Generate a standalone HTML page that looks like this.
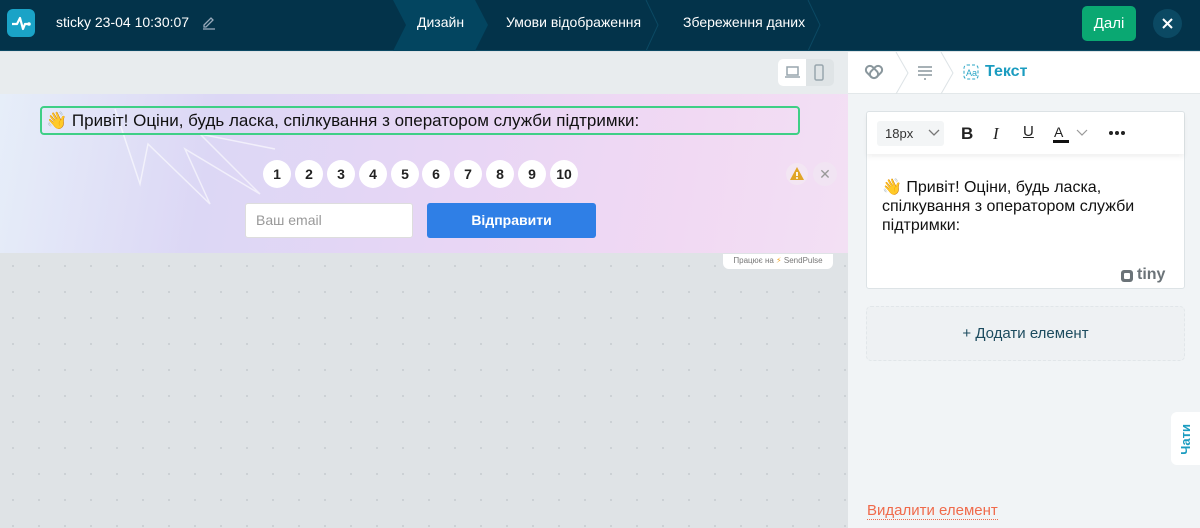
<!DOCTYPE html>
<html><head><meta charset="utf-8"><style>
*{box-sizing:border-box;margin:0;padding:0}
body{width:1200px;height:528px;overflow:hidden;font-family:"Liberation Sans","DejaVu Sans",sans-serif;position:relative;background:#dfe3e6}
.abs{position:absolute}
.hdr{left:0;top:0;width:1200px;height:51px;background:#03334a;border-bottom:1px solid #0b4963}
.tab{color:#fff;font-size:14px;top:0;height:51px;line-height:45px}
.num{width:28px;height:28px;border-radius:50%;background:#fff;top:160px;text-align:center;line-height:28px;font-weight:bold;font-size:14px;color:#222}
</style></head><body>
<div class="abs hdr"></div>
<div class="abs" style="left:7px;top:9px;width:28px;height:28px;border-radius:6px;background:#1aa3c7"></div>
<svg class="abs" style="left:7px;top:9px" width="28" height="28"><path d="M5 15h5l3-6 3 11 2-5h4" stroke="#fff" stroke-width="2.2" fill="none" stroke-linejoin="round"/><circle cx="22" cy="15" r="1.8" fill="#fff"/></svg>
<div class="abs" style="left:56px;top:14px;color:#fff;font-size:14px">sticky 23-04 10:30:07</div>
<svg class="abs" style="left:201px;top:14px" width="16" height="16"><path d="M3 11l7-7 2 2-7 7H3z" stroke="#9ab" fill="none" stroke-width="1.3"/><path d="M2 15h12" stroke="#9ab" stroke-width="1.3"/></svg>
<svg class="abs" style="left:390px;top:0" width="440" height="51"><polygon points="3,0 85,0 98,25 85,51 3,51 16,25" fill="#034560"/><path d="M256,0 L268,25 256,51 M418,0 L430,25 418,51" stroke="#0b4963" fill="none"/></svg>
<div class="abs tab" style="left:417px">Дизайн</div>
<div class="abs tab" style="left:506px">Умови відображення</div>
<div class="abs tab" style="left:683px">Збереження даних</div>
<div class="abs" style="left:1082px;top:6px;width:54px;height:35px;border-radius:5px;background:#0aa872;color:#fff;font-size:15px;text-align:center;line-height:35px">Далі</div>
<div class="abs" style="left:1153px;top:9px;width:29px;height:29px;border-radius:50%;background:#0b4963"></div>
<svg class="abs" style="left:1153px;top:9px" width="29" height="29"><path d="M10 10l9 9M19 10l-9 9" stroke="#fff" stroke-width="2"/></svg>

<div class="abs" style="left:0;top:52px;width:848px;height:42px;background:#e8ecee"></div>
<div class="abs" style="left:778px;top:59px;width:56px;height:27px;border-radius:5px;background:#dfe4e6"></div>
<div class="abs" style="left:778px;top:59px;width:28px;height:27px;border-radius:5px 0 0 5px;background:#fff"></div>
<svg class="abs" style="left:784px;top:64px" width="44" height="18"><rect x="3" y="3" width="11" height="8" fill="none" stroke="#98a6ad" stroke-width="1.5"/><path d="M1 13h15" stroke="#98a6ad" stroke-width="1.5"/><rect x="31" y="1" width="8" height="15" rx="1.5" fill="none" stroke="#98a6ad" stroke-width="1.5"/></svg>

<div class="abs" style="left:0;top:253px;width:848px;height:275px;background-color:#dfe3e6;background-image:radial-gradient(#c5cbcf 0.8px,transparent 1px);background-size:26px 26px"></div>
<div class="abs" style="left:0;top:94px;width:848px;height:159px;background:linear-gradient(100deg,#e6eef9 0%,#dcd7f5 25%,#e8d6f5 55%,#f1d9f3 80%,#f3e0f4 100%)"></div>
<svg class="abs" style="left:0;top:94px" width="300" height="159"><path d="M115 15 L140 90 L148 50 L210 110 L185 55 L260 100 L200 40 L275 55" stroke="#fff" stroke-opacity=".6" fill="none" stroke-width="1.5"/></svg>
<div class="abs" style="left:40px;top:106px;width:760px;height:29px;border:2px solid #3fcf86;border-radius:4px;font-size:17px;line-height:25px;padding-left:4px;color:#111">👋 Привіт! Оціни, будь ласка, спілкування з оператором служби підтримки:</div>
<div class="num abs" style="left:263px">1</div><div class="num abs" style="left:295px">2</div><div class="num abs" style="left:327px">3</div><div class="num abs" style="left:359px">4</div><div class="num abs" style="left:391px">5</div><div class="num abs" style="left:422px">6</div><div class="num abs" style="left:454px">7</div><div class="num abs" style="left:486px">8</div><div class="num abs" style="left:518px">9</div><div class="num abs" style="left:550px">10</div>
<div class="abs" style="left:786px;top:163px;width:22px;height:22px;border-radius:50%;background:#f3e6f3"></div>
<svg class="abs" style="left:788px;top:165px" width="18" height="18"><path d="M9 2 L16 15 H2Z" fill="#e0a526"/><path d="M9 7v4" stroke="#fff" stroke-width="1.8"/><circle cx="9" cy="13" r="1" fill="#fff"/></svg>
<div class="abs" style="left:813px;top:162px;width:24px;height:24px;border-radius:50%;background:#f1e4f3;color:#999;text-align:center;line-height:24px;font-size:14px">✕</div>
<div class="abs" style="left:245px;top:203px;width:168px;height:35px;background:#fff;border-radius:3px;border:1px solid #ddd;color:#999;font-size:14px;line-height:33px;padding-left:10px">Ваш email</div>
<div class="abs" style="left:427px;top:203px;width:169px;height:35px;background:#2f7fe6;border-radius:3px;color:#fff;font-size:14px;font-weight:bold;text-align:center;line-height:35px">Відправити</div>
<div class="abs" style="left:723px;top:254px;width:110px;height:15px;background:#fff;border-radius:0 0 6px 6px;font-size:8px;color:#777;text-align:center;line-height:14px">Працює на <span style="color:#f5a623">⚡</span> SendPulse</div>

<div class="abs" style="left:848px;top:52px;width:352px;height:476px;background:#f1f4f6"></div>
<div class="abs" style="left:848px;top:52px;width:352px;height:42px;background:#fff;border-bottom:1px solid #e3e8ea"></div>
<svg class="abs" style="left:848px;top:52px" width="200" height="42"><path d="M48 0 L60 21 48 42 M93 0 L105 21 93 42" stroke="#dde3e6" fill="none"/><rect x="20" y="13" width="8" height="14" rx="4" transform="rotate(-45 24 20)" fill="none" stroke="#8a979d" stroke-width="2"/><rect x="24" y="13" width="8" height="14" rx="4" transform="rotate(45 28 20)" fill="none" stroke="#8a979d" stroke-width="2"/><path d="M70 15h14 M70 19h14 M70 23h14 M76 27h2" stroke="#8a979d" stroke-width="1.5"/><rect x="116" y="13" width="14" height="14" rx="3" fill="none" stroke="#2aa6c6" stroke-dasharray="3 2"/><text x="118" y="24" font-size="9" fill="#2aa6c6" font-family="Liberation Sans">Aa</text></svg>
<div class="abs" style="left:985px;top:63px;color:#1b9cc0;font-size:16px;font-weight:bold">Текст</div>

<div class="abs" style="left:866px;top:111px;width:319px;height:178px;background:#fff;border:1px solid #dde3e6;border-radius:3px"></div>
<div class="abs" style="left:867px;top:112px;width:317px;height:42px;box-shadow:0 3px 5px rgba(0,0,0,.06)"></div>
<div class="abs" style="left:877px;top:121px;width:67px;height:25px;background:#f3f5f6;border-radius:3px;font-size:13px;line-height:25px;padding-left:8px;color:#333">18px</div>
<svg class="abs" style="left:928px;top:128px" width="12" height="10"><path d="M1 2l5 5 5-5" stroke="#777" fill="none" stroke-width="1.3"/></svg>
<div class="abs" style="left:961px;top:124px;font-size:17px;font-weight:bold;color:#222">B</div>
<div class="abs" style="left:993px;top:124px;font-size:17px;font-style:italic;font-family:'Liberation Serif',serif;color:#222">I</div>
<div class="abs" style="left:1023px;top:123px;font-size:15px;text-decoration:underline;color:#222">U</div>
<div class="abs" style="left:1054px;top:124px;font-size:14px;color:#222">A</div>
<div class="abs" style="left:1053px;top:140px;width:16px;height:3px;background:#111"></div>
<svg class="abs" style="left:1076px;top:128px" width="12" height="10"><path d="M1 2l5 5 5-5" stroke="#999" fill="none" stroke-width="1.2"/></svg>
<svg class="abs" style="left:1108px;top:130px" width="18" height="6"><circle cx="3" cy="3" r="2" fill="#222"/><circle cx="9" cy="3" r="2" fill="#222"/><circle cx="15" cy="3" r="2" fill="#222"/></svg>
<div class="abs" style="left:882px;top:178px;width:280px;font-size:16px;line-height:19px;color:#111">👋 Привіт! Оціни, будь ласка, спілкування з оператором служби підтримки:</div>
<svg class="abs" style="left:1120px;top:269px" width="14" height="14"><rect x="1" y="1" width="12" height="12" rx="3" fill="#6b7378"/><rect x="4" y="4" width="6" height="6" rx="1" fill="#fff"/></svg>
<div class="abs" style="left:1137px;top:266px;font-size:16px;font-weight:bold;color:#6b7378">tiny</div>
<div class="abs" style="left:866px;top:306px;width:319px;height:55px;border:1px dashed #e1e6e9;border-radius:5px;background:#eef1f3;color:#1c4b5e;font-size:15px;text-align:center;line-height:53px">+ Додати елемент</div>
<div class="abs" style="left:1171px;top:412px;width:29px;height:53px;background:#fff;border-radius:6px 0 0 6px"></div>
<div class="abs" style="left:1178px;top:424px;writing-mode:vertical-rl;transform:rotate(180deg);color:#1b9cc0;font-size:13px;font-weight:bold">Чати</div>
<div class="abs" style="left:867px;top:502px;color:#f06a4b;font-size:15px;border-bottom:1px dotted #f06a4b;line-height:17px">Видалити елемент</div>
</body></html>
